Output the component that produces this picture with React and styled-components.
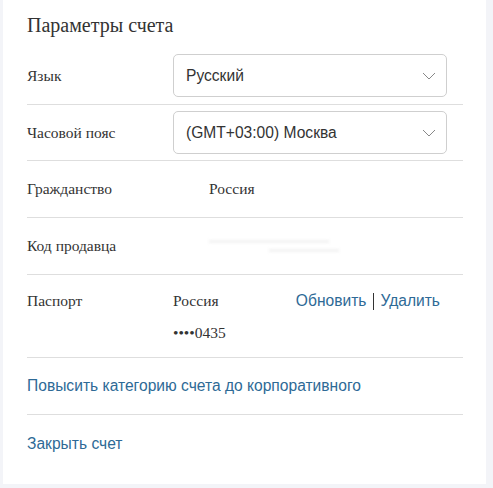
import React from "react";
import styled, { createGlobalStyle } from "styled-components";

const Global = createGlobalStyle`
  html, body { margin: 0; padding: 0; background: #f3f4f8; }
  body { width: 493px; height: 488px; overflow: hidden; }
`;

const Page = styled.div`
  padding: 0 7px 5px 3px;
`;

const Card = styled.div`
  background: #fff;
  padding: 13px 23px 12px 24px;
  color: #333;
`;

const Title = styled.h2`
  margin: 0 0 10px;
  font-family: "Liberation Serif", "Times New Roman", serif;
  font-weight: normal;
  font-size: 20px;
  line-height: 24px;
  color: #333;
`;

const Row = styled.div`
  display: flex;
  align-items: ${(p) => (p.$top ? "flex-start" : "center")};
  min-height: ${(p) => (p.$compact ? "auto" : "57px")};
  padding: ${(p) => p.$pad || "0"};
  border-bottom: ${(p) => (p.$last ? "none" : "1px solid #dedede")};
  box-sizing: border-box;
`;

const Label = styled.div`
  width: 146px;
  flex: none;
  font-family: "Liberation Serif", "Times New Roman", serif;
  font-size: 15.5px;
  line-height: 20px;
  color: #333;
`;

const Value = styled.div`
  font-family: "Liberation Serif", "Times New Roman", serif;
  font-size: 15.5px;
  line-height: 20px;
  color: #333;
  margin-left: ${(p) => p.$offset || 0}px;
  display: flex;
  flex-direction: column;
  gap: 12px;
`;

const Hidden = styled.div`
  margin-left: 36px;
  width: 130px;
  display: flex;
  flex-direction: column;
  gap: 6px;
`;

const Smudge = styled.div`
  height: 3px;
  width: ${(p) => p.$w}px;
  margin-left: ${(p) => p.$ml || 0}px;
  background: #f2f2f2;
  filter: blur(1.5px);
`;

const Select = styled.div`
  width: 274px;
  height: 43px;
  box-sizing: border-box;
  border: 1px solid #cfcfcf;
  border-radius: 5px;
  display: flex;
  align-items: center;
  justify-content: space-between;
  padding: 0 10px 0 12px;
  font-family: "Liberation Sans", Arial, sans-serif;
  font-size: 15.6px;
  color: #333;
`;

const Links = styled.div`
  margin-left: auto;
  margin-right: 23px;
  display: flex;
  align-items: center;
`;

const Link = styled.a`
  color: #2e6a96;
  text-decoration: none;
  font-family: "Liberation Sans", Arial, sans-serif;
  font-size: 15.6px;
  line-height: 20px;
`;

const Sep = styled.span`
  display: inline-block;
  width: 1px;
  height: 17px;
  background: #333;
  margin: 0 6px 0 7px;
`;

const Chevron = () => (
  <svg width="14" height="8" viewBox="0 0 14 8" fill="none">
    <path d="M1 1 L7 7 L13 1" stroke="#888" strokeWidth="1" />
  </svg>
);

export default function App() {
  return (
    <Page>
      <Global />
      <Card>
        <Title>Параметры счета</Title>
        <Row $compact $pad="7px 0">
          <Label>Язык</Label>
          <Select>
            <span>Русский</span>
            <Chevron />
          </Select>
        </Row>
        <Row $compact $pad="6px 0">
          <Label>Часовой пояс</Label>
          <Select>
            <span>(GMT+03:00) Москва</span>
            <Chevron />
          </Select>
        </Row>
        <Row>
          <Label>Гражданство</Label>
          <Value $offset={36}>Россия</Value>
        </Row>
        <Row>
          <Label>Код продавца</Label>
          <Hidden>
            <Smudge $w={120} />
            <Smudge $w={70} $ml={60} />
          </Hidden>
        </Row>
        <Row $top $compact $pad="16px 0 14px">
          <Label>Паспорт</Label>
          <Value>
            <span>Россия</span>
            <span>••••0435</span>
          </Value>
          <Links>
            <Link href="#">Обновить</Link>
            <Sep />
            <Link href="#">Удалить</Link>
          </Links>
        </Row>
        <Row>
          <Link href="#">Повысить категорию счета до корпоративного</Link>
        </Row>
        <Row $last>
          <Link href="#">Закрыть счет</Link>
        </Row>
      </Card>
    </Page>
  );
}
